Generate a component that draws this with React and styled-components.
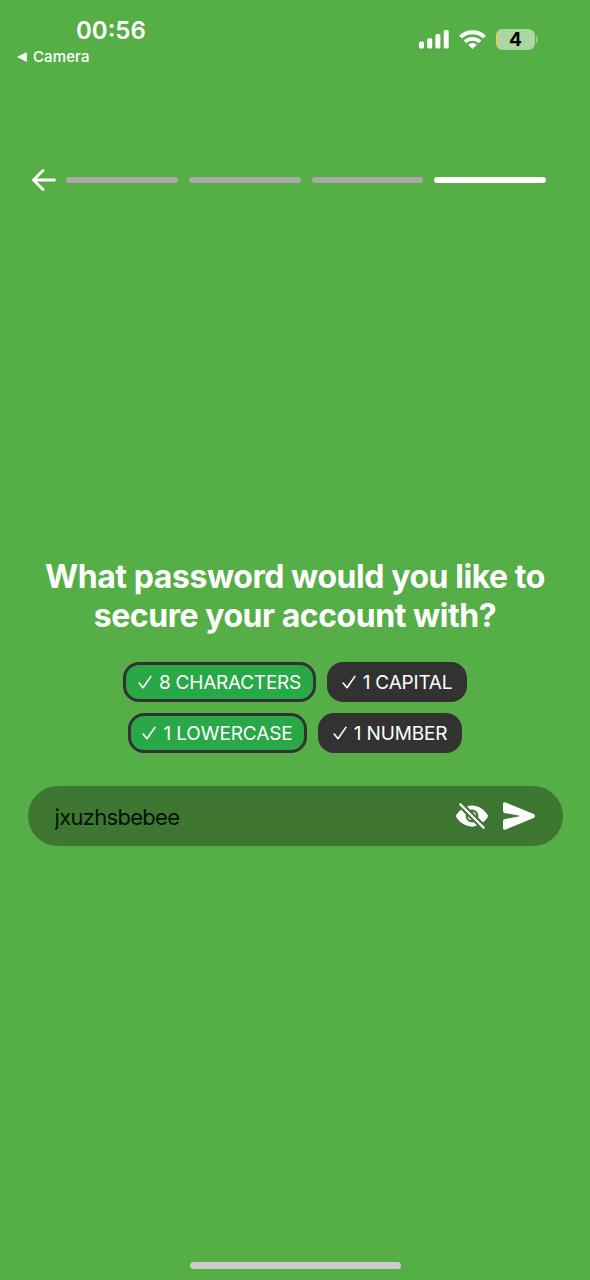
import React from "react";
import styled, { createGlobalStyle } from "styled-components";
import { IoEyeOff, IoSend } from "react-icons/io5";

const GlobalStyle = createGlobalStyle`
  *, *::before, *::after { box-sizing: border-box; }
  body { margin: 0; background: #56ae46; }
`;

const Screen = styled.main`
  display: flex;
  flex-direction: column;
  width: 590px;
  height: 1280px;
  background: #56ae46;
  color: #fff;
  font-family: Inter, "Liberation Sans", sans-serif;
  overflow: hidden;
`;

const StatusBar = styled.header`
  display: flex;
  justify-content: space-between;
  height: 168px;
  padding: 16px 52px 0 17px;
`;

const Clock = styled.time`
  display: block;
  padding: 1px 0 0 59px;
  font-size: 24px;
  line-height: 28px;
  font-weight: 600;
  letter-spacing: 0;
`;

const BackToApp = styled.div`
  display: flex;
  align-items: center;
  gap: 6px;
  margin-top: 2px;
  font-size: 15px;
  line-height: 20px;
  font-weight: 500;
  letter-spacing: 0.1px;
`;

const Indicators = styled.div`
  display: flex;
  align-items: center;
  height: 24px;
  margin-top: 11px;
`;

const SignalIcon = styled.svg`
  width: 30px;
  height: 20px;
  margin-right: 10px;
`;

const WifiIcon = styled.svg`
  width: 27px;
  height: 20px;
  margin-right: 10px;
`;

const Battery = styled.div`
  width: 39px;
  height: 21px;
  border-radius: 6.5px;
  background: linear-gradient(90deg, #e4cf5c 0 2px, #abd7a3 2px);
  color: #000;
  font-size: 19px;
  line-height: 22px;
  font-weight: 700;
  text-align: center;
`;

const BatteryCap = styled.span`
  width: 2px;
  height: 7px;
  margin-left: 1px;
  border-radius: 0 3px 3px 0;
  background: #91ca86;
`;

const ProgressHeader = styled.nav`
  display: flex;
  align-items: center;
  height: 24px;
  padding: 0 44px 0 31px;
`;

const BackButton = styled.button`
  display: flex;
  width: 26px;
  height: 24px;
  margin-right: 9px;
  padding: 0;
  border: 0;
  background: none;
`;

const Steps = styled.div`
  display: flex;
  flex: 1;
  gap: 11px;
`;

const Step = styled.span`
  flex: 1;
  height: 6px;
  border-radius: 3px;
  background: ${(p) => (p.$active ? "#fff" : "#a9aaa8")};
`;

const Content = styled.section`
  display: flex;
  flex-direction: column;
  align-items: center;
  margin-top: 365px;
`;

const Title = styled.h1`
  margin: 0;
  font-size: 32px;
  line-height: 39px;
  font-weight: 700;
  text-align: center;
  white-space: nowrap;
`;

const TitleLine = styled.span`
  display: block;
  letter-spacing: ${(p) => p.$tracking}px;
`;

const Rules = styled.div`
  display: flex;
  flex-direction: column;
  align-items: center;
  gap: 11px;
  margin-top: 27px;
`;

const RuleRow = styled.div`
  display: flex;
  gap: 11px;
`;

const RuleChip = styled.span`
  display: flex;
  align-items: center;
  justify-content: center;
  gap: 7px;
  width: ${(p) => p.$width}px;
  height: 40px;
  border: 3px solid #323232;
  border-radius: 16px;
  background: ${(p) => (p.$met ? "#29a847" : "#323232")};
  font-size: 19px;
  line-height: 24px;
  letter-spacing: ${(p) => p.$tracking}px;
  white-space: nowrap;
`;

const RuleLabel = styled.span`
  padding-top: 1px;
`;

const CheckIcon = styled.svg`
  width: 14px;
  height: 16px;
  flex: none;
`;

const PasswordField = styled.div`
  display: flex;
  align-items: center;
  width: 535px;
  height: 60px;
  margin-top: 33px;
  padding: 0 27px;
  border-radius: 30px;
  background: #3e7732;
`;

const PasswordInput = styled.input`
  flex: 1;
  min-width: 0;
  height: 40px;
  padding: 1px 0 0;
  border: 0;
  outline: 0;
  background: none;
  color: #061004;
  font: 400 22px/28px Inter, "Liberation Sans", sans-serif;
  letter-spacing: -0.7px;
`;

const IconButton = styled.button`
  display: flex;
  margin-left: 13px;
  padding: 0;
  border: 0;
  background: none;
  color: #fff;
  font-size: 34px;
`;

const HomeIndicator = styled.div`
  width: 211px;
  height: 7px;
  margin: auto auto 11px;
  border-radius: 4px;
  background: #cbcbcb;
`;

function Rule({ met, width, tracking = 0, children }) {
  return (
    <RuleChip $met={met} $width={width} $tracking={tracking}>
      <CheckIcon viewBox="0 0 14 16" fill="none" stroke="#fff" strokeWidth="1.6" strokeLinecap="round" strokeLinejoin="round">
        <path d="M1.2 9 5 13.7 12.9 2.4" />
      </CheckIcon>
      <RuleLabel>{children}</RuleLabel>
    </RuleChip>
  );
}

export default function App() {
  return (
    <Screen>
      <GlobalStyle />
      <StatusBar>
        <div>
          <Clock>00:56</Clock>
          <BackToApp>
            <svg width="10" height="10" viewBox="0 0 10 10">
              <path d="M.5 5 9.5.6v8.8z" fill="#fff" stroke="#fff" strokeWidth=".6" strokeLinejoin="round" />
            </svg>
            <span>Camera</span>
          </BackToApp>
        </div>
        <Indicators>
          <SignalIcon viewBox="0 0 30 20" fill="#fff">
            <rect x="0" y="12.5" width="5" height="7" rx="1.5" />
            <rect x="8.2" y="9.2" width="5" height="10.3" rx="1.5" />
            <rect x="16.4" y="5" width="5" height="14.5" rx="1.5" />
            <rect x="24.7" y="1" width="5" height="18.5" rx="1.5" />
          </SignalIcon>
          <WifiIcon viewBox="0 0 27 20" fill="none" stroke="#fff" strokeWidth="3.9">
            <path d="M1.5 8.2a17.2 17.2 0 0 1 24 0" />
            <path d="M6 12.9a10.8 10.8 0 0 1 15 0" />
            <path d="M13.5 20 9.2 15.7a6.3 6.3 0 0 1 8.6 0z" fill="#fff" stroke="none" />
          </WifiIcon>
          <Battery>4</Battery>
          <BatteryCap />
        </Indicators>
      </StatusBar>

      <ProgressHeader>
        <BackButton aria-label="Back">
          <svg width="26" height="24" viewBox="0 0 26 24" fill="none" stroke="#fff" strokeWidth="2.8" strokeLinecap="round" strokeLinejoin="round">
            <path d="M12 2.5 2.5 12l9.5 9.5M2.5 12h21" />
          </svg>
        </BackButton>
        <Steps>
          <Step />
          <Step />
          <Step />
          <Step $active />
        </Steps>
      </ProgressHeader>

      <Content>
        <Title>
          <TitleLine $tracking={-0.44}>What password would you like to</TitleLine>
          <TitleLine $tracking={-0.46}>secure your account with?</TitleLine>
        </Title>
        <Rules>
          <RuleRow>
            <Rule met width={193} tracking={-0.24}>8 CHARACTERS</Rule>
            <Rule width={140} tracking={-0.2}>1 CAPITAL</Rule>
          </RuleRow>
          <RuleRow>
            <Rule met width={179} tracking={-0.12}>1 LOWERCASE</Rule>
            <Rule width={144} tracking={-0.15}>1 NUMBER</Rule>
          </RuleRow>
        </Rules>
        <PasswordField>
          <PasswordInput aria-label="Password" defaultValue="jxuzhsbebee" spellCheck={false} />
          <IconButton aria-label="Hide password"><IoEyeOff /></IconButton>
          <IconButton aria-label="Submit"><IoSend /></IconButton>
        </PasswordField>
      </Content>
      <HomeIndicator />
    </Screen>
  );
}
